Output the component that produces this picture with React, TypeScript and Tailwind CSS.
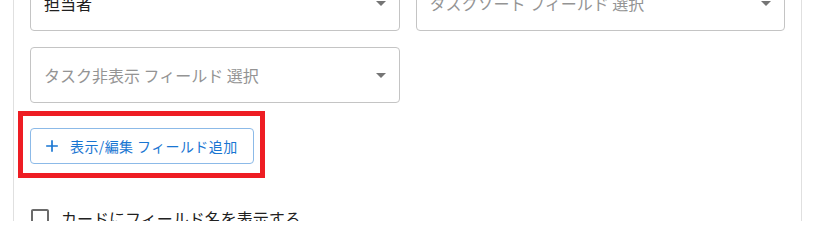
import { ReactNode } from "react";

const FONT = { fontFamily: '"Noto Sans CJK JP", "Noto Sans", sans-serif' };

function SelectBox({ children, placeholder = false }: { children: ReactNode; placeholder?: boolean }) {
  return (
    <div className="h-14 flex items-center border border-[#c4c4c4] rounded pl-[13px] pr-[6px] bg-white">
      <span
        className={`flex-1 truncate text-base leading-6 ${
          placeholder ? "text-[#949494]" : "text-[#212121]"
        }`}
      >
        {children}
      </span>
      <svg viewBox="0 0 24 24" className="w-6 h-6 fill-[#757575]">
        <path d="M7 10l5 5 5-5z" />
      </svg>
    </div>
  );
}

function AddFieldButton() {
  return (
    <div className="relative w-fit">
      {/* annotation frame */}
      <div className="absolute -left-[12px] -top-[17px] -right-[11px] -bottom-[14px] border-[5px] border-[#ee1d23] pointer-events-none" />
      <button className="h-9 flex items-center pl-[15px] pr-[15px] border border-[#8cbae8] rounded text-[#1976d2] text-sm tracking-[0.4px] bg-white">
        <svg viewBox="0 0 24 24" className="w-5 h-5 -ml-1 mr-2 fill-[#1976d2]">
          <path d="M19 13h-6v6h-2v-6H5v-2h6V5h2v6h6v2z" />
        </svg>
        表示/編集 フィールド追加
      </button>
    </div>
  );
}

export default function App() {
  return (
    <div className="w-[813px] h-[221px] overflow-hidden bg-white" style={FONT}>
      <div className="ml-[13px] w-[789px] -mt-[25px] border-x border-[#e0e0e0] px-4 pb-6">
        <div className="grid grid-cols-2 gap-4">
          <SelectBox>担当者</SelectBox>
          <SelectBox placeholder>タスクソート フィールド 選択</SelectBox>
          <SelectBox placeholder>タスク非表示 フィールド 選択</SelectBox>
        </div>

        <div className="mt-[25px]">
          <AddFieldButton />
        </div>

        <label className="mt-[33px] -ml-[11px] flex items-center w-fit cursor-pointer">
          <span className="p-[9px]">
            <svg viewBox="0 0 24 24" className="w-6 h-6 fill-[#6b6b6b]">
              <path d="M19 5v14H5V5h14m0-2H5c-1.11 0-2 .9-2 2v14c0 1.1.89 2 2 2h14c1.1 0 2-.9 2-2V5c0-1.1-.9-2-2-2z" />
            </svg>
          </span>
          <span className="text-base leading-6 text-[#212121]">カードにフィールド名を表示する</span>
        </label>
      </div>
    </div>
  );
}
